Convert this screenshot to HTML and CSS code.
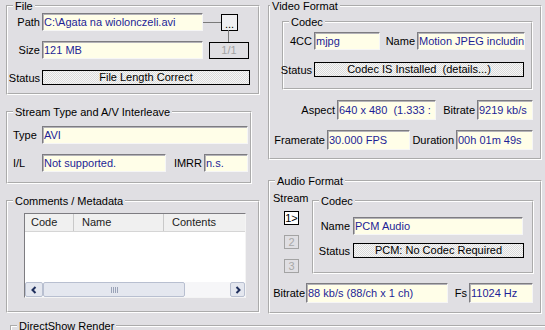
FILE: index.html
```html
<!DOCTYPE html>
<html lang="en">
<head>
    <meta charset="UTF-8">
    <meta name="viewport" content="width=device-width, initial-scale=1.0">
    <title>GSpot</title>
    <link rel="stylesheet" href="styles.css">
</head>
<body>

<div class="panes">
    <div class="col-left">
        <fieldset class="group file-group">
            <legend>File</legend>
            <div class="row">
                <span class="lbl file-lbl">Path</span>
                <span class="field file-field">C:\Agata na wiolonczeli.avi</span>
                <span class="wire"></span>
                <span class="btn browse-btn">...</span>
            </div>
            <div class="row size-row">
                <span class="lbl file-lbl">Size</span>
                <span class="field file-field">121 MB</span>
                <span class="btn count-btn">1/1</span>
            </div>
            <div class="row fstatus-row">
                <span class="lbl file-lbl">Status</span>
                <span class="status file-status">File Length Correct</span>
            </div>
        </fieldset>

        <fieldset class="group stream-group">
            <legend>Stream Type and A/V Interleave</legend>
            <div class="row">
                <span class="lbl-left stream-lbl">Type</span>
                <span class="field type-field">AVI</span>
            </div>
            <div class="row il-row">
                <span class="lbl-left stream-lbl">I/L</span>
                <span class="field il-field">Not supported.</span>
                <span class="lbl imrr-lbl">IMRR</span>
                <span class="field imrr-field">n.s.</span>
            </div>
        </fieldset>

        <fieldset class="group comments-group">
            <legend>Comments / Metadata</legend>
            <div class="listview">
                <div class="list-head">
                    <span class="col-code">Code</span>
                    <span class="col-name">Name</span>
                    <span class="col-contents">Contents</span>
                </div>
                <div class="list-body"></div>
                <div class="hscroll">
                    <span class="sb-btn">
                        <svg width="8" height="8" viewBox="0 0 8 8"><path d="M5.5 1 L2.5 4 L5.5 7" fill="none" stroke="#1f2f5c" stroke-width="2"/></svg>
                    </span>
                    <span class="sb-thumb">
                        <svg width="7" height="6" viewBox="0 0 7 6"><path d="M0.5 0v6M2.5 0v6M4.5 0v6M6.5 0v6" stroke="#9aa3b8" stroke-width="1"/></svg>
                    </span>
                    <span class="sb-track"></span>
                    <span class="sb-btn sb-right">
                        <svg width="8" height="8" viewBox="0 0 8 8"><path d="M2.5 1 L5.5 4 L2.5 7" fill="none" stroke="#1f2f5c" stroke-width="2"/></svg>
                    </span>
                </div>
            </div>
        </fieldset>
    </div>

    <div class="col-right">
        <fieldset class="group video-group">
            <legend class="legend-flush">Video Format</legend>
            <fieldset class="group vcodec-group">
                <legend>Codec</legend>
                <div class="row">
                    <span class="lbl vcodec-lbl">4CC</span>
                    <span class="field fourcc-field">mjpg</span>
                    <span class="lbl vname-lbl">Name</span>
                    <span class="field vname-field">Motion JPEG includin</span>
                </div>
                <div class="row vstatus-row">
                    <span class="lbl vcodec-lbl">Status</span>
                    <span class="status vstatus">Codec IS Installed&nbsp; (details...)</span>
                </div>
            </fieldset>
            <div class="row aspect-row">
                <span class="lbl aspect-lbl">Aspect</span>
                <span class="field tall aspect-field">640 x 480&nbsp; (1.333 :</span>
                <span class="lbl vbit-lbl">Bitrate</span>
                <span class="field tall vbit-field">9219 kb/s</span>
            </div>
            <div class="row frame-row">
                <span class="lbl frame-lbl">Framerate</span>
                <span class="field tall frame-field">30.000 FPS</span>
                <span class="lbl dur-lbl">Duration</span>
                <span class="field tall dur-field">00h 01m 49s</span>
            </div>
        </fieldset>

        <fieldset class="group audio-group">
            <legend>Audio Format</legend>
            <div class="audio-top">
                <div class="streams">
                    <span class="streams-title">Stream</span>
                    <span class="btn stream-btn">1&gt;</span>
                    <span class="btn stream-btn off">2</span>
                    <span class="btn stream-btn off">3</span>
                </div>
                <fieldset class="group acodec-group">
                    <legend>Codec</legend>
                    <div class="row">
                        <span class="lbl acodec-lbl">Name</span>
                        <span class="field aname-field">PCM Audio</span>
                    </div>
                    <div class="row astatus-row">
                        <span class="lbl acodec-lbl">Status</span>
                        <span class="status astatus">PCM: No Codec Required</span>
                    </div>
                </fieldset>
            </div>
            <div class="row abit-row">
                <span class="lbl abit-lbl">Bitrate</span>
                <span class="field tall abit-field">88 kb/s (88/ch x 1 ch)</span>
                <span class="lbl fs-lbl">Fs</span>
                <span class="field tall fs-field">11024 Hz</span>
            </div>
        </fieldset>
    </div>
</div>

<fieldset class="group render-group">
    <legend>DirectShow Render</legend>
</fieldset>

</body>
</html>
```

FILE: styles.css
```css
* {
    box-sizing: border-box;
}
html, body {
    margin: 0;
    height: 330px;
    overflow: hidden;
}
body {
    background-color: #e0dfe3;
    font-family: "Liberation Sans", Arial, sans-serif;
    font-size: 11px;
    color: #000;
}
.panes {
    display: flex;
    align-items: flex-start;
    gap: 8px;
    padding-left: 6px;
}
.col-left {
    width: 254px;
}
.col-right {
    width: 274px;
}

/* group boxes */
.group {
    margin: 0;
    padding: 0;
    min-width: 0;
    border: 2px groove #fff;
}
.group > legend {
    margin-left: 5px;
    padding: 0 2px;
    line-height: 12px;
}
.group > legend.legend-flush {
    margin-left: 0;
}

.row {
    display: flex;
    align-items: center;
}
.lbl {
    display: flex;
    justify-content: flex-end;
    flex-shrink: 0;
    white-space: nowrap;
}
.lbl-left {
    flex-shrink: 0;
    white-space: nowrap;
}

/* edit boxes */
.field {
    flex-shrink: 0;
    height: 18px;
    padding-left: 1px;
    line-height: 16px;
    white-space: nowrap;
    overflow: hidden;
    color: #1e1e96;
    background-color: #fffee8;
    border: 1px solid;
    border-color: #7d7c81 #f6f6f6 #f6f6f6 #7d7c81;
    box-shadow: inset 1px 1px 0 #b4b3b8;
}
.field.tall {
    height: 20px;
    line-height: 18px;
}
.status {
    flex-shrink: 0;
    height: 15px;
    line-height: 13px;
    text-align: center;
    white-space: nowrap;
    overflow: hidden;
    border: 1px solid #000;
    background: repeating-conic-gradient(#f7f7f7 0 25%, #dadada 0 50%) 0 0 / 2px 2px;
}
.btn {
    flex-shrink: 0;
    display: flex;
    align-items: center;
    justify-content: center;
    border: 1px solid #000;
}

/* File */
.file-group {
    width: 254px;
    padding: 1px 0 8px;
}
.file-lbl {
    width: 32px;
    margin-right: 2px;
}
.file-field {
    width: 161px;
}
.wire {
    width: 18px;
    height: 1px;
    background-color: #7a7a7a;
}
.browse-btn {
    position: relative;
    width: 17px;
    height: 17px;
    padding-top: 3px;
    background-color: #efeff1;
}
.browse-btn::after {
    content: "";
    position: absolute;
    left: 6px;
    top: 100%;
    width: 1px;
    height: 12px;
    background-color: #7a7a7a;
}
.count-btn {
    width: 40px;
    height: 17px;
    margin-left: 6px;
    color: #a3a3a3;
}
.size-row {
    margin-top: 10px;
}
.fstatus-row {
    margin-top: 11px;
}
.file-status {
    width: 208px;
}

/* Stream type */
.stream-group {
    width: 246px;
    margin-top: 11px;
    padding: 8px 0 10px;
}
.stream-lbl {
    width: 34px;
    padding-left: 5px;
}
.type-field {
    width: 206px;
}
.il-row {
    margin-top: 10px;
}
.il-field {
    width: 124px;
}
.imrr-lbl {
    width: 36px;
    margin-right: 2px;
}
.imrr-field {
    width: 44px;
}

/* Comments */
.comments-group {
    width: 254px;
    margin-top: 11px;
    padding: 6px 0 13px;
}
.listview {
    display: flex;
    flex-direction: column;
    width: 222px;
    height: 85px;
    margin-left: 16px;
    background-color: #fff;
    border: 1px solid;
    border-color: #7d7c81 #f4f4f4 #f4f4f4 #7d7c81;
}
.list-head {
    display: flex;
    height: 18px;
    background-color: #f0f0f0;
    border-bottom: 1px solid #d5d5d5;
}
.list-head span {
    line-height: 17px;
    color: #222;
    border-right: 1px solid #c9c9c9;
}
.col-code {
    width: 49px;
    padding-left: 6px;
}
.col-name {
    width: 90px;
    padding-left: 8px;
}
.list-head .col-contents {
    flex: 1;
    padding-left: 8px;
    border-right: none;
}
.list-body {
    flex: 1;
}
.hscroll {
    display: flex;
    height: 15px;
}
.sb-btn, .sb-thumb {
    display: flex;
    align-items: center;
    justify-content: center;
    background-color: #e4e7ef;
    border: 1px solid #b8bfd0;
    border-radius: 2px;
}
.sb-btn {
    width: 18px;
}
.sb-right {
    width: 15px;
}
.sb-thumb {
    width: 142px;
}
.sb-track {
    flex: 1;
    background-color: #f6f6f8;
}

/* Video format */
.video-group {
    width: 274px;
    padding: 0 0 8px;
}
.vcodec-group {
    width: 251px;
    margin: 4px 0 0 12px;
    padding: 4px 0 11px;
}
.vcodec-lbl {
    width: 28px;
    margin-right: 2px;
}
.fourcc-field {
    width: 66px;
}
.vname-lbl {
    width: 35px;
    margin-right: 2px;
}
.vname-field {
    width: 108px;
}
.vstatus-row {
    margin-top: 12px;
}
.vstatus {
    width: 210px;
}
.aspect-row, .frame-row {
    margin-top: 10px;
}
.aspect-lbl {
    width: 65px;
    margin-right: 2px;
}
.aspect-field {
    width: 99px;
}
.vbit-lbl {
    width: 39px;
    margin-right: 2px;
}
.vbit-field {
    width: 56px;
}
.frame-lbl {
    width: 55px;
    margin-right: 2px;
}
.frame-field {
    width: 83px;
}
.dur-lbl {
    width: 44px;
    margin-right: 2px;
}
.dur-field {
    width: 77px;
}

/* Audio format */
.audio-group {
    width: 274px;
    margin-top: 15px;
    padding: 0 0 9px;
}
.audio-top {
    display: flex;
    align-items: flex-start;
}
.streams {
    display: flex;
    flex-direction: column;
    align-items: flex-start;
    width: 42px;
    padding: 5px 0 0 3px;
}
.streams-title {
    line-height: 12px;
}
.stream-btn {
    width: 15px;
    height: 14px;
    margin: 7px 0 0 11px;
    background-color: #fff;
}
.stream-btn.off {
    margin-top: 10px;
    color: #a8a8a8;
    background-color: #e0dfe3;
    border-color: #a3a3a3;
}
.acodec-group {
    width: 222px;
    margin-top: 8px;
    padding: 10px 0 14px;
}
.acodec-lbl {
    width: 36px;
    margin-right: 3px;
}
.aname-field {
    width: 170px;
}
.astatus-row {
    margin-top: 8px;
}
.astatus {
    width: 171px;
}
.abit-row {
    margin-top: 9px;
}
.abit-lbl {
    width: 35px;
    margin-right: 1px;
}
.abit-field {
    width: 142px;
}
.fs-lbl {
    width: 19px;
    margin-right: 2px;
}
.fs-field {
    width: 64px;
}

/* DirectShow */
.render-group {
    width: 560px;
    height: 14px;
    margin: 6px 0 0 10px;
}
```
